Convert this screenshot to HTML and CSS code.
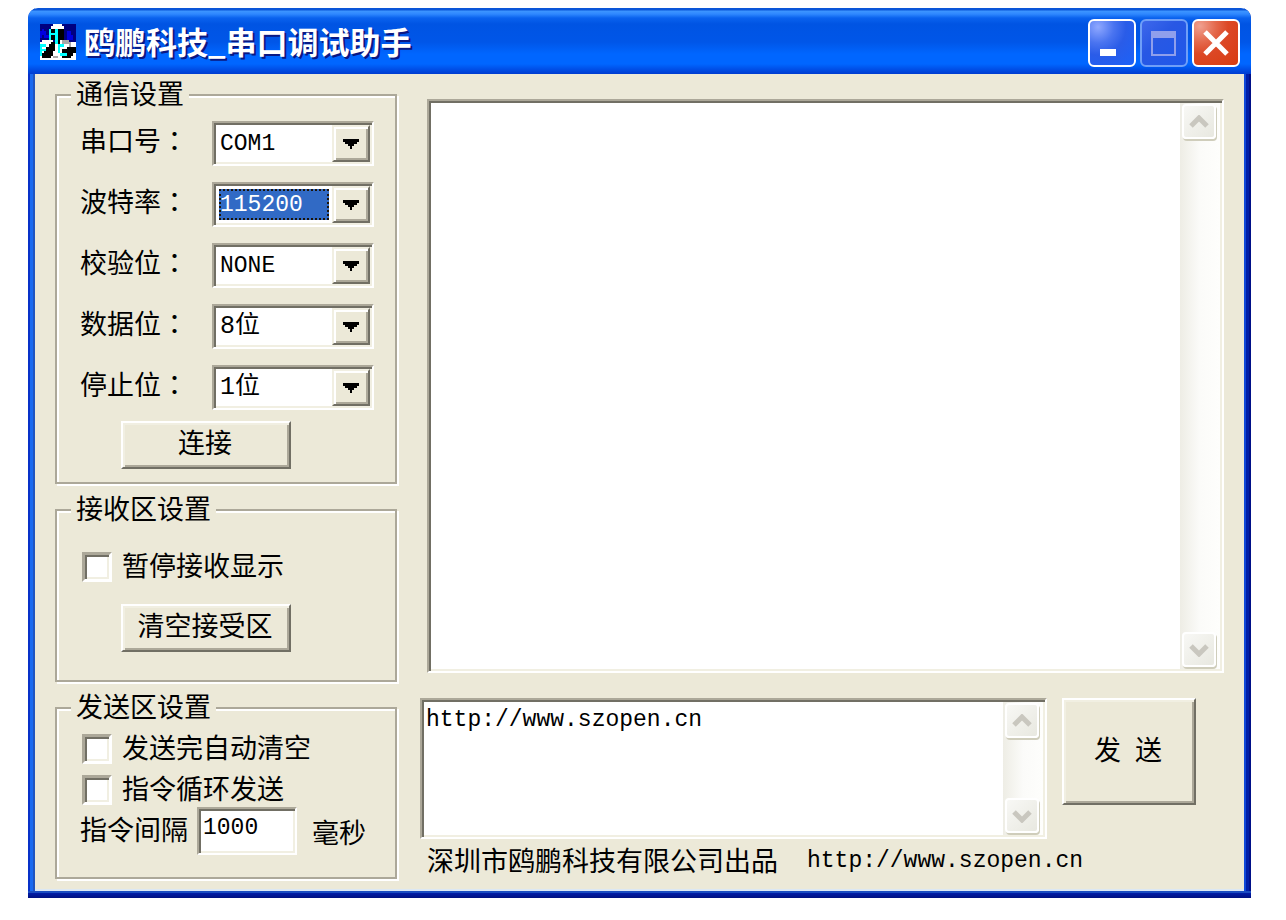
FILE: index.html
```html
<!DOCTYPE html>
<html lang="zh-CN">
<head>
<meta charset="utf-8">
<meta name="viewport" content="width=device-width, initial-scale=1">
<title>鸥鹏科技_串口调试助手</title>
<link rel="stylesheet" href="styles.css">
</head>
<body>
<main class="window">
  <header class="titlebar">
    <svg class="app-icon" viewBox="0 0 16 16" shape-rendering="crispEdges" aria-hidden="true">
      <path fill="#000080" d="M0 0h16v16H0z"/>
      <path fill="#0000e0" d="M1 2h1v1h1v2H1v1H0V3h1zM12 3h2v2h1v2h-3zM2 5h2v1H2z"/>
      <path fill="#fff" d="M6 0h4v1h1v1H5V1h1zM0 8h1V7h5v1h2V7h5v1h3v8H0z"/>
      <path fill="#000" d="M5 2h6v5H9v2H7V7H5z"/>
      <path fill="#000" d="M3 10h1V9h1V8h2v4h-1v2H5v1H1v-2h1v-1h1zM12 10h4v3h-1v1h-1v1h-4v-1h2v-1h-2v-2h2z"/>
      <path fill="#0ff" d="M4 2h1v5H4zM7 2h1v7H7zM5 4h2v1H5zM0 9h3v1H1v1h2v1H1v2H0zM8 9h3v1H9v3h3v1H9v-1H8z"/>
      <path fill="#a8a8a8" d="M10 7h3v1h1v2h-1V9h-3zM6 14h2v1H6z"/>
    </svg>
    <h1 class="title">鸥鹏科技_串口调试助手</h1>
    <div class="caption-buttons">
      <button class="caption" type="button" aria-label="最小化">
        <svg viewBox="0 0 42 42" aria-hidden="true"><path fill="#fff" d="M9 27h16v7H9z"/></svg>
      </button>
      <button class="caption caption-off" type="button" aria-label="最大化" disabled>
        <svg viewBox="0 0 42 42" aria-hidden="true"><path fill="#8f9fec" fill-rule="evenodd" d="M8 9h25v25H8zm2 7v16h21V16z"/></svg>
      </button>
      <button class="caption caption-close" type="button" aria-label="关闭">
        <svg viewBox="0 0 42 42" aria-hidden="true"><path stroke="#fff" stroke-width="5" d="M10 10l22 22M32 10L10 32"/></svg>
      </button>
    </div>
  </header>

  <div class="client">
    <form class="settings">
      <fieldset class="group">
        <legend>通信设置</legend>
        <div class="port-rows">
          <div class="port-row">
            <label for="port">串口号<span class="colon" lang="ja">：</span></label>
            <div class="combo sunken"><select id="port"><option>COM1</option></select><span class="arrow"><svg viewBox="0 0 16 10" shape-rendering="crispEdges"><path d="M0 0h16v3h-2v2h-3v2H9v3H7V7H5V5H2V3H0z"/></svg></span></div>
          </div>
          <div class="port-row">
            <label for="baud">波特率<span class="colon" lang="ja">：</span></label>
            <div class="combo sunken"><select id="baud" class="focused"><option>115200</option></select><span class="arrow"><svg viewBox="0 0 16 10" shape-rendering="crispEdges"><path d="M0 0h16v3h-2v2h-3v2H9v3H7V7H5V5H2V3H0z"/></svg></span></div>
          </div>
          <div class="port-row">
            <label for="parity">校验位<span class="colon" lang="ja">：</span></label>
            <div class="combo sunken"><select id="parity"><option>NONE</option></select><span class="arrow"><svg viewBox="0 0 16 10" shape-rendering="crispEdges"><path d="M0 0h16v3h-2v2h-3v2H9v3H7V7H5V5H2V3H0z"/></svg></span></div>
          </div>
          <div class="port-row">
            <label for="data">数据位<span class="colon" lang="ja">：</span></label>
            <div class="combo sunken"><select id="data" class="cjk"><option>8位</option></select><span class="arrow"><svg viewBox="0 0 16 10" shape-rendering="crispEdges"><path d="M0 0h16v3h-2v2h-3v2H9v3H7V7H5V5H2V3H0z"/></svg></span></div>
          </div>
          <div class="port-row">
            <label for="stop">停止位<span class="colon" lang="ja">：</span></label>
            <div class="combo sunken"><select id="stop" class="cjk"><option>1位</option></select><span class="arrow"><svg viewBox="0 0 16 10" shape-rendering="crispEdges"><path d="M0 0h16v3h-2v2h-3v2H9v3H7V7H5V5H2V3H0z"/></svg></span></div>
          </div>
        </div>
        <button class="push" type="button">连接</button>
      </fieldset>

      <fieldset class="group receive">
        <legend>接收区设置</legend>
        <label class="check"><input type="checkbox" class="sunken">暂停接收显示</label>
        <button class="push" type="button">清空接受区</button>
      </fieldset>

      <fieldset class="group send-options">
        <legend>发送区设置</legend>
        <label class="check"><input type="checkbox" class="sunken">发送完自动清空</label>
        <label class="check"><input type="checkbox" class="sunken">指令循环发送</label>
        <div class="interval">
          <label for="interval">指令间隔</label>
          <input id="interval" class="sunken" type="text" value="1000">
          <span class="unit">毫秒</span>
        </div>
      </fieldset>
    </form>

    <section class="work">
      <div class="memo sunken output">
        <textarea aria-label="接收区" readonly></textarea>
        <div class="scroll">
          <button type="button" aria-label="向上滚动" disabled><svg viewBox="0 0 20 14" aria-hidden="true"><path d="M2 11l8-8 8 8"/></svg></button>
          <button type="button" aria-label="向下滚动" disabled><svg viewBox="0 0 20 14" aria-hidden="true"><path d="M2 3l8 8 8-8"/></svg></button>
        </div>
      </div>
      <div class="send-row">
        <div class="memo sunken">
          <textarea aria-label="发送区">http://www.szopen.cn</textarea>
          <div class="scroll">
            <button type="button" aria-label="向上滚动" disabled><svg viewBox="0 0 20 14" aria-hidden="true"><path d="M2 11l8-8 8 8"/></svg></button>
            <button type="button" aria-label="向下滚动" disabled><svg viewBox="0 0 20 14" aria-hidden="true"><path d="M2 3l8 8 8-8"/></svg></button>
          </div>
        </div>
        <button class="push send" type="button"><span>发</span><span>送</span></button>
      </div>
      <footer class="credit"><span>深圳市鸥鹏科技有限公司出品</span><span class="mono">http://www.szopen.cn</span></footer>
    </section>
  </div>
</main>
</body>
</html>
```
FILE: styles.css
```css
:root {
  --face: #ece9d8;
  --shade: #aca899;
  --dark: #716f64;
  --light: #f1efe2;
  --cjk: "Noto Sans CJK SC", sans-serif;
  --mono: "Liberation Mono", "Noto Sans CJK SC", monospace;
}

* { box-sizing: border-box; }

body {
  margin: 0;
  min-height: 100vh;
  padding: 8px 35px 22px 28px;
  display: flex;
  background: #fff;
  color: #000;
  font: 27px/28px var(--cjk);
}

button, input, select, textarea {
  margin: 0;
  color: inherit;
  font: inherit;
  border-radius: 0;
}

.window {
  flex: 1;
  display: flex;
  flex-direction: column;
  padding: 0 7px 7px;
  border-radius: 10px 10px 0 0;
  overflow: hidden;
  background:
    linear-gradient(#1a4cc0 2px, #001ca8 2px, #001080) bottom / 100% 7px no-repeat,
    linear-gradient(90deg, #0831c8 2px, #1a6af0 2px 5px, #1f55c0 5px) left / 7px 100% no-repeat,
    linear-gradient(90deg, #1048d8 2px, #001ea8 2px 5px, #001088 5px) right / 7px 100% no-repeat;
}

.titlebar {
  display: flex;
  align-items: center;
  height: 66px;
  margin: 0 -7px;
  padding: 4px 11px 0;
  background: linear-gradient(#0a55d8 0, #0a55d8 2px, #3d95ff 3px, #2f88ff 6px, #0a62ee 10px, #0054e3 16px, #0056e8 34px, #0066ff 46px, #0066ff 56px, #0050e8 61px, #003cd0 66px);
}

.app-icon {
  width: 37px;
  height: 36px;
  margin-bottom: 2px;
}

.title {
  flex: 1;
  margin: 0 0 4px 8px;
  color: #fff;
  font-size: 31px;
  line-height: 40px;
  font-weight: 700;
  text-shadow: 2px 2px 0 #0a1883;
  white-space: nowrap;
}

.caption-buttons {
  display: flex;
  gap: 4px;
}

.caption {
  width: 48px;
  height: 48px;
  padding: 0;
  border: 2px solid #fff;
  border-radius: 6px;
  background: radial-gradient(circle at 8px 6px, #8fa8ff, #4a74f0 16px, #2a5ce8 28px, #1c62f8);
}

.caption svg { display: block; width: 42px; height: 42px; margin: 0 auto; }

.caption-off {
  border-color: #6f9ff8;
  background: linear-gradient(135deg, #3e68ec, #2858e4 40%, #1f58ea);
}

.caption-close {
  background: radial-gradient(circle at 6px 5px, #f0a090, #e4694c 16px, #dc4826 28px, #d83c10);
}

.client {
  flex: 1;
  display: grid;
  grid-template-columns: 342px 1fr;
  gap: 23px;
  padding: 7px 20px 10px;
  border-bottom: 2px solid #dce8f4;
  background: var(--face);
}

.settings {
  display: flex;
  flex-direction: column;
  gap: 12px;
}

.group {
  display: flex;
  flex-direction: column;
  align-items: flex-start;
  min-width: 0;
  margin: 0;
  padding: 12px 23px 13px;
  border: 2px solid var(--shade);
  box-shadow: 2px 2px 0 #fff, inset 2px 2px 0 #fff;
}

legend {
  margin-left: -9px;
  padding: 0 5px 4px;
  line-height: 24px;
  background: var(--face);
}

.port-rows {
  display: flex;
  flex-direction: column;
  gap: 16px;
  margin-bottom: 11px;
}

.port-row {
  display: flex;
  align-items: center;
}

.port-row label {
  width: 132px;
  padding-bottom: 8px;
  white-space: nowrap;
}

.colon { font-family: "Noto Sans CJK JP", sans-serif; }

.sunken {
  border: 2px solid;
  border-color: var(--shade) #fff #fff var(--shade);
  box-shadow: inset 2px 2px 0 var(--dark), inset -2px -2px 0 var(--light);
  background: #fff;
}

.combo {
  display: flex;
  width: 162px;
  height: 45px;
  padding: 2px;
}

.combo select {
  flex: 1;
  min-width: 0;
  margin: 3px;
  padding: 0 0 0 1px;
  border: 0;
  outline: 0;
  appearance: none;
  background: #fff;
  font: 23px/30px var(--mono);
}

.combo .cjk { font-size: 25px; }

.combo .focused {
  color: #fff;
  background: #316ac5;
  outline: 2px dotted #1c1408;
  outline-offset: -2px;
}

.arrow {
  display: grid;
  place-items: center;
  width: 38px;
  border: 2px solid;
  border-color: var(--light) var(--dark) var(--dark) var(--light);
  box-shadow: inset 2px 2px 0 #fff, inset -2px -2px 0 var(--shade);
  background: var(--face);
}

.arrow svg { width: 16px; height: 10px; }

.push {
  width: 170px;
  height: 48px;
  margin-left: 41px;
  padding: 0 2px 6px 0;
  border: 2px solid;
  border-color: #fff var(--dark) var(--dark) #fff;
  box-shadow: inset 2px 2px 0 var(--light), inset -2px -2px 0 var(--shade);
  background: var(--face);
}

.receive {
  gap: 22px;
  padding-top: 28px;
  padding-bottom: 28px;
}

.check {
  display: flex;
  align-items: flex-start;
  gap: 10px;
  height: 30px;
  padding-left: 2px;
  line-height: 26px;
}

.check input {
  width: 30px;
  height: 30px;
  appearance: none;
  border-width: 3px;
}

.send-options { padding-bottom: 22px; }

.send-options .check { margin-bottom: 11px; }

.send-options .check + .check { margin-bottom: 2px; }

.interval {
  display: flex;
  align-items: center;
}

.interval input {
  width: 100px;
  height: 48px;
  margin: 0 15px 0 9px;
  padding: 0 4px 6px;
  font: 23px/28px var(--mono);
}

.interval label { padding-bottom: 4px; }

.unit { padding-top: 2px; }

.work {
  display: flex;
  flex-direction: column;
  min-width: 0;
  padding-top: 18px;
}

.memo {
  display: flex;
  flex: 1;
  min-width: 0;
  padding: 2px;
}

.output { margin: 0 0 25px 7px; }

.memo textarea {
  flex: 1;
  min-width: 0;
  height: 100%;
  padding: 4px 2px;
  border: 0;
  outline: 0;
  resize: none;
  overflow: hidden;
  background: #fff;
  font: 23px/28px var(--mono);
}

.scroll {
  display: flex;
  flex-direction: column;
  justify-content: space-between;
  width: 40px;
  padding: 1px 3px 2px 2px;
  background: linear-gradient(90deg, #eeede5, #fbfbf9 50%, #fefefc);
}

.scroll button {
  display: grid;
  place-items: center;
  width: 34px;
  height: 35px;
  padding: 0;
  border: 2px solid #fff;
  border-radius: 4px;
  box-shadow: 1px 2px 0 #cfcdbb;
  background: linear-gradient(135deg, #f8f8f5, #e8e8e0);
}

.scroll svg { width: 20px; height: 14px; fill: none; stroke: #c9c7bf; stroke-width: 5; }

.send-row {
  display: flex;
  align-items: flex-start;
  gap: 15px;
  margin-right: 28px;
}

.send-row .memo { height: 141px; }

.send {
  display: flex;
  justify-content: center;
  align-items: center;
  gap: 14px;
  width: 134px;
  height: 107px;
  margin: 0;
}

.credit {
  display: flex;
  flex-wrap: wrap;
  gap: 0 29px;
  padding: 7px 0 3px 7px;
}

.mono { font: 23px/30px var(--mono); }
```
